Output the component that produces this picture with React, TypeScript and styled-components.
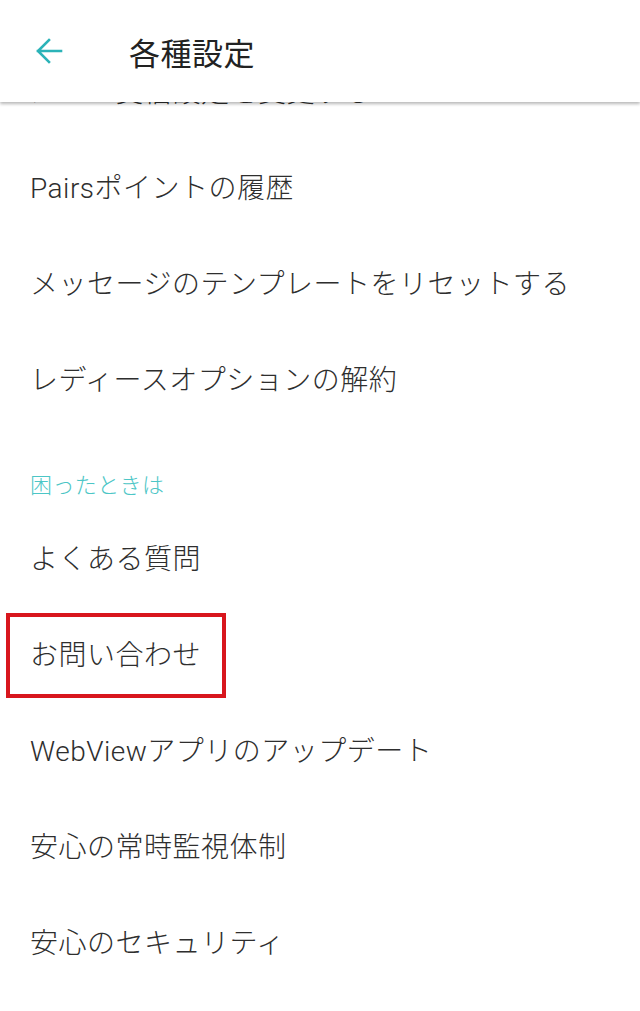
import React from 'react';
import styled, { createGlobalStyle } from 'styled-components';

const GlobalStyle = createGlobalStyle`
  html, body {
    margin: 0;
    padding: 0;
    background: #ffffff;
  }
  body {
    font-family: Roboto, "Noto Sans CJK JP", sans-serif;
    color: #333333;
  }
`;

const Screen = styled.div`
  width: 640px;
  height: 1011px;
  overflow: hidden;
  background: #ffffff;
  display: flex;
  flex-direction: column;
`;

const TopBar = styled.header`
  position: relative;
  z-index: 2;
  height: 102px;
  flex-shrink: 0;
  display: flex;
  align-items: center;
  background: #ffffff;
  box-shadow: 0 2px 3px rgba(0, 0, 0, 0.28);
`;

const BackButton = styled.button`
  border: none;
  background: none;
  padding: 0;
  margin-left: 34px;
  width: 30px;
  height: 30px;
  display: flex;
  align-items: center;
  justify-content: center;
  cursor: pointer;
`;

const Title = styled.h1`
  margin: 0 0 0 65px;
  font-size: 31px;
  font-weight: 400;
  color: #222222;
  letter-spacing: 0.5px;
`;

const List = styled.ul`
  list-style: none;
  margin: -60px 0 0;
  padding: 0;
`;

const Row = styled.li<{ $height?: number }>`
  position: relative;
  height: ${(p) => p.$height ?? 96}px;
  display: flex;
  align-items: center;
  padding-left: 30px;
  font-size: 28px;
  font-weight: 300;
  letter-spacing: 0.5px;
  color: #2e2e2e;
  white-space: nowrap;
`;

const SectionTitle = styled.li`
  height: 83px;
  display: flex;
  align-items: flex-end;
  padding: 0 0 12px 30px;
  box-sizing: border-box;
  font-size: 22px;
  line-height: 22px;
  font-weight: 300;
  letter-spacing: 0.4px;
  color: #4cc6c6;
`;

const Highlight = styled.span`
  position: absolute;
  left: 6px;
  top: 8px;
  width: 220px;
  height: 85px;
  box-sizing: border-box;
  border: 4px solid #d8161d;
  pointer-events: none;
`;

const ArrowLeft = () => (
  <svg width="30" height="30" viewBox="0 0 30 30" fill="none">
    <path
      d="M27 15H4M15 4L4 15l11 11"
      stroke="#2bb3b8"
      strokeWidth="2.6"
      strokeLinecap="square"
    />
  </svg>
);

type Item = { label: string; section?: boolean; marked?: boolean };

const items: Item[] = [
  { label: 'メール受信設定を変更する' },
  { label: 'Pairsポイントの履歴' },
  { label: 'メッセージのテンプレートをリセットする' },
  { label: 'レディースオプションの解約' },
  { label: '困ったときは', section: true },
  { label: 'よくある質問' },
  { label: 'お問い合わせ', marked: true },
  { label: 'WebViewアプリのアップデート' },
  { label: '安心の常時監視体制' },
  { label: '安心のセキュリティ' },
];

const App = () => {
  return (
    <>
      <GlobalStyle />
      <Screen>
        <TopBar>
          <BackButton aria-label="戻る">
            <ArrowLeft />
          </BackButton>
          <Title>各種設定</Title>
        </TopBar>
        <List>
          {items.map((item) =>
            item.section ? (
              <SectionTitle key={item.label}>{item.label}</SectionTitle>
            ) : (
              <Row key={item.label}>
                {item.label}
                {item.marked && <Highlight />}
              </Row>
            )
          )}
        </List>
      </Screen>
    </>
  );
};

export default App;
